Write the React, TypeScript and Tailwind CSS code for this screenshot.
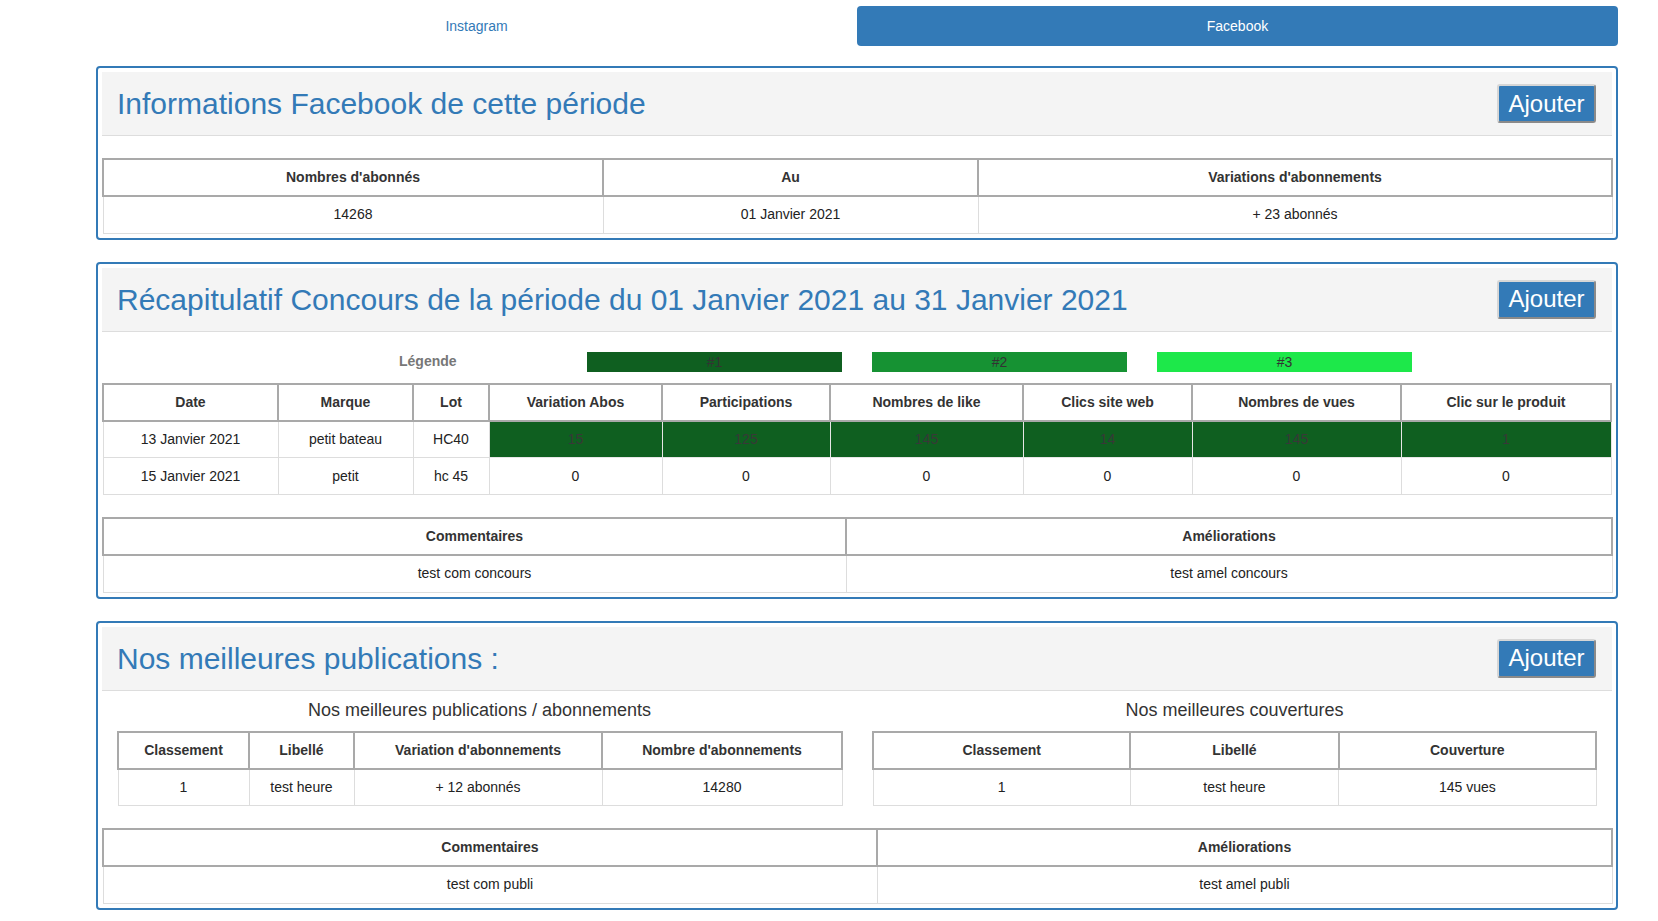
import React from "react";

const font = { fontFamily: '"Liberation Sans", Arial, sans-serif' };

type Col = { label: string; width: number };

const Th = ({ children }: { children: React.ReactNode }) => (
  <th className="border-2 border-[#a9a9a9] h-[37px] p-0 text-center text-[14px] font-bold text-[#333]">
    {children}
  </th>
);

const Td = ({ children, green }: { children: React.ReactNode; green?: boolean }) => (
  <td
    className={
      green
        ? "border border-[#e6e6e6] bg-[#0f5f20] h-[37px] p-0 text-center text-[14px] text-[#383838]"
        : "border border-[#ddd] h-[37px] p-0 text-center text-[14px] text-[#222]"
    }
  >
    {children}
  </td>
);

const DataTable = ({
  cols,
  rows,
  greenFrom,
}: {
  cols: Col[];
  rows: string[][];
  greenFrom?: number;
}) => (
  <table className="w-full table-fixed border-collapse">
    <colgroup>
      {cols.map((c) => (
        <col key={c.label} style={{ width: c.width }} />
      ))}
    </colgroup>
    <thead>
      <tr>
        {cols.map((c) => (
          <Th key={c.label}>{c.label}</Th>
        ))}
      </tr>
    </thead>
    <tbody>
      {rows.map((r, i) => (
        <tr key={i}>
          {r.map((v, j) => (
            <Td key={j} green={greenFrom !== undefined && i === 0 && j >= greenFrom}>
              {v}
            </Td>
          ))}
        </tr>
      ))}
    </tbody>
  </table>
);

const Panel = ({ title, children }: { title: string; children: React.ReactNode }) => (
  <section className="border-2 border-[#337ab7] rounded-[4px] px-1 pt-1 pb-1">
    <div className="h-[64px] bg-[#f4f4f4] border-b border-[#ddd] flex items-center justify-between pl-[15px] pr-[16px]">
      <h2 className="text-[30px] leading-[33px] text-[#337ab7]">{title}</h2>
      <button className="h-[39px] w-[99px] bg-[#337ab7] text-white text-[24px] leading-none rounded-[3px] border-2 border-t-[#d6d6d6] border-l-[#d6d6d6] border-r-[#8a8a8a] border-b-[#8a8a8a]">
        Ajouter
      </button>
    </div>
    {children}
  </section>
);

export default function App() {
  return (
    <div className="min-h-screen bg-white pt-[6px] pb-4" style={font}>
      <div className="ml-[96px] w-[1522px]">
        {/* tabs */}
        <div className="grid grid-cols-2 h-[40px] text-[14px]">
          <div className="flex items-center justify-center text-[#337ab7]">Instagram</div>
          <div className="flex items-center justify-center bg-[#337ab7] text-white rounded-[4px]">Facebook</div>
        </div>

        <div className="mt-[20px] flex flex-col gap-[22px]">
          {/* Informations */}
          <Panel title="Informations Facebook de cette période">
            <div className="mt-[22px]">
              <DataTable
                cols={[
                  { label: "Nombres d'abonnés", width: 500 },
                  { label: "Au", width: 375 },
                  { label: "Variations d'abonnements", width: 634 },
                ]}
                rows={[["14268", "01 Janvier 2021", "+ 23 abonnés"]]}
              />
            </div>
          </Panel>

          {/* Concours */}
          <Panel title="Récapitulatif Concours de la période du 01 Janvier 2021 au 31 Janvier 2021">
            <div className="flex items-center h-[20px] mt-[20px] mb-[11px] text-[14px]">
              <div className="w-[485px] pl-[297px] font-bold text-[#777]">Légende</div>
              <div className="flex gap-[30px]">
                <div className="w-[255px] h-[20px] bg-[#0f5f20] text-[#333] text-center leading-[20px]">#1</div>
                <div className="w-[255px] h-[20px] bg-[#169233] text-[#333] text-center leading-[20px]">#2</div>
                <div className="w-[255px] h-[20px] bg-[#1de84a] text-[#333] text-center leading-[20px]">#3</div>
              </div>
            </div>
            <DataTable
              cols={[
                { label: "Date", width: 175 },
                { label: "Marque", width: 135 },
                { label: "Lot", width: 76 },
                { label: "Variation Abos", width: 173 },
                { label: "Participations", width: 168 },
                { label: "Nombres de like", width: 193 },
                { label: "Clics site web", width: 169 },
                { label: "Nombres de vues", width: 209 },
                { label: "Clic sur le produit", width: 210 },
              ]}
              rows={[
                ["13 Janvier 2021", "petit bateau", "HC40", "15", "125", "145", "14", "145", "1"],
                ["15 Janvier 2021", "petit", "hc 45", "0", "0", "0", "0", "0", "0"],
              ]}
              greenFrom={3}
            />
            <div className="mt-[22px]">
              <DataTable
                cols={[
                  { label: "Commentaires", width: 743 },
                  { label: "Améliorations", width: 766 },
                ]}
                rows={[["test com concours", "test amel concours"]]}
              />
            </div>
          </Panel>

          {/* Publications */}
          <Panel title="Nos meilleures publications :">
            <div className="grid grid-cols-2">
              <div className="px-[15px]">
                <h3 className="text-[18px] text-[#333] text-center leading-[20px] mt-[9px] mb-[11px]">
                  Nos meilleures publications / abonnements
                </h3>
                <DataTable
                  cols={[
                    { label: "Classement", width: 131 },
                    { label: "Libellé", width: 105 },
                    { label: "Variation d'abonnements", width: 248 },
                    { label: "Nombre d'abonnements", width: 240 },
                  ]}
                  rows={[["1", "test heure", "+ 12 abonnés", "14280"]]}
                />
              </div>
              <div className="px-[15px]">
                <h3 className="text-[18px] text-[#333] text-center leading-[20px] mt-[9px] mb-[11px]">
                  Nos meilleures couvertures
                </h3>
                <DataTable
                  cols={[
                    { label: "Classement", width: 257 },
                    { label: "Libellé", width: 208 },
                    { label: "Couverture", width: 257 },
                  ]}
                  rows={[["1", "test heure", "145 vues"]]}
                />
              </div>
            </div>
            <div className="mt-[22px]">
              <DataTable
                cols={[
                  { label: "Commentaires", width: 774 },
                  { label: "Améliorations", width: 735 },
                ]}
                rows={[["test com publi", "test amel publi"]]}
              />
            </div>
          </Panel>
        </div>
      </div>
    </div>
  );
}
